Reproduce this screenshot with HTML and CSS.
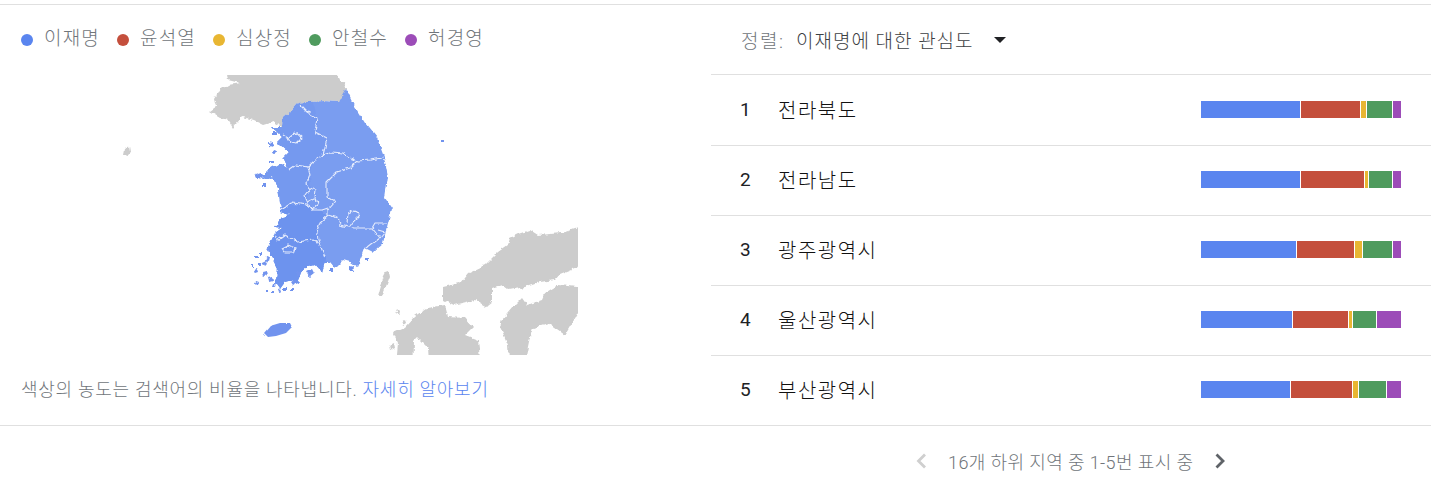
FILE: index.html
```html
<!DOCTYPE html>
<html lang="ko">
<head>
<meta charset="utf-8">
<title>하위 지역별 비교</title>
<link rel="stylesheet" href="styles.css">
</head>
<body>
<main class="widget">
  <section class="map-panel">
    <ul class="legend">
      <li class="legend-item"><span class="dot c-blue"></span>이재명</li>
      <li class="legend-item"><span class="dot c-red"></span>윤석열</li>
      <li class="legend-item"><span class="dot c-yellow"></span>심상정</li>
      <li class="legend-item"><span class="dot c-green"></span>안철수</li>
      <li class="legend-item"><span class="dot c-purple"></span>허경영</li>
    </ul>
    <svg class="map" viewBox="0 75 711 280" width="711" height="280" aria-label="지도">
      <defs>
        <filter id="rough" filterUnits="userSpaceOnUse" x="0" y="40" width="711" height="350">
          <feTurbulence type="fractalNoise" baseFrequency="0.16" numOctaves="3" seed="7" result="n"/>
          <feDisplacementMap in="SourceGraphic" in2="n" scale="5" xChannelSelector="R" yChannelSelector="G"/>
          <feGaussianBlur stdDeviation="0.35"/>
        </filter>
        <filter id="soft" filterUnits="userSpaceOnUse" x="0" y="40" width="711" height="350">
          <feTurbulence type="fractalNoise" baseFrequency="0.09" numOctaves="2" seed="3" result="n"/>
          <feDisplacementMap in="SourceGraphic" in2="n" scale="3" xChannelSelector="R" yChannelSelector="G"/>
          <feGaussianBlur stdDeviation="0.3"/>
        </filter>
        <clipPath id="frame"><rect x="0" y="75" width="578" height="280"/></clipPath>
        <clipPath id="mainland">
          <path d="M346 88L355 107L365 123L377 138L384 157L388 177L385 198L392 208L388 223L383 243L373 252L365 248L362 256L357 267L350 262L343 260L335 268L330 262L325 262L322 272L315 264L308 266L303 270L300 278L297 285L292 280L285 282L280 289L275 282L278 270L272 258L268 247L275 233L282 228L275 227L282 217L290 215L280 212L282 206L280 203L278 187L272 177L265 180L262 177L268 170L280 163L288 168L283 157L288 152L277 142L282 137L272 127L282 127L283 118L290 112L298 103L310 102L323 101L338 102Z"/>
        </clipPath>
      </defs>
      <g clip-path="url(#frame)">
        <g class="land" filter="url(#rough)">
          <path d="M225 60H332L340 80L346 87L345 93L338 102L323 101L310 102L298 103L290 112L283 118L282 127L273 122L263 125L253 120L242 117L236 124L233 128L228 120L220 118L210 112L217 107L215 98L220 90L228 85L240 83L228 80Z"/>
          <path d="M125 149l5-3 1 6-4 3-3-1zM378 297l3-11 2-8 3-6 3-1 1 5-3 8-3 7-2 6zM396 314l2-5 2 2-1 5zM402 322l3-2 1 3-3 2zM390 345l4-2 1 5-4 2z"/>
          <path d="M595 226L577 228L562 233L538 235L530 230L518 234L510 238L508 245L498 252L485 265L468 273L460 283L443 287L443 300L453 305L475 300L487 307L492 303L492 288L502 285L508 290L525 287L540 282L555 280L560 274L577 267L595 262Z"/>
          <path d="M595 287L577 287L558 285L545 293L542 300L527 305L522 298L513 307L502 320L500 327L503 333L508 345L510 375H522L530 337L533 328L548 323L565 335L577 315L595 305Z"/>
          <path d="M445 305L427 308L415 316L405 327L393 332L398 343L395 375H413L414 342L418 338L428 348L430 375H482L478 340L465 335L473 327L465 318L448 317Z"/>
        </g>
        <g filter="url(#rough)">
          <g clip-path="url(#mainland)">
            <rect class="base" x="250" y="80" width="150" height="215"/>
            <path class="mid" d="M260 100H312L318 120L316 132L327 140L323 155L312 163L310 175L311 188L306 200L312 212H260Z"/>
            <path class="dark" d="M255 205H306L318 210L328 215L320 222L316 232L318 240L326 258L322 300H255Z"/>
          </g>
          <path class="isle" d="M441 140h3v2h-3zM262 262l4-2 2 4-3 3zM254 270l3-1 1 3-3 1zM262 272l4-1 1 4-4 2zM268 277l4-1 1 4-4 1zM256 281l3 1-1 3-3-1zM278 290l3-1 1 3-3 1zM284 287l3 0 0 3-3 0zM290 288l3 0 0 2-3 0zM273 283l3 0-1 4-3-1zM266 256l3 1-1 4-3-1zM260 252l3 0 0 3-3 0zM292 282l4-2 1 3-3 2zM306 272l6-3 2 4-5 4zM296 272l4 0 0 4-4 0zM330 268l4 0 0 4-4 0zM349 266l5 1-1 5-4-1zM365 258l3 0 0 3-3 0zM255 174l6-2 3 5-7 1zM268 142l5 1-1 4-4-1zM273 132l4 0 0 3-4 0zM254 256l3 0 0 3-3 0zM258 264l3 0 0 3-3 0zM252 264l2 0 0 3-2 0zM268 248l3 1-1 3-3-1zM262 184l4 0 0 3-4 0zM274 150l3 1-1 3-3-1zM270 160l4 0 0 3-4 0zM266 290l2 0 0 2-2 0zM272 292l2 0 0 2-2 0z"/>
          <g class="bounds">
            <path d="M300 105L307 112L317 118L316 126L315 132L327 138L325 147L323 155L332 152L343 153L350 158L357 161L370 160L383 158"/>
            <path d="M323 155L320 157L313 162L308 167L295 165L288 170"/>
            <path d="M357 161L350 168L337 172L327 182L327 197L335 202L328 210L328 215"/>
            <path d="M308 167L310 175L307 183L310 188L305 195L307 202L311 210L322 210L328 208"/>
            <path d="M310 188L316 190L315 198L307 202M316 198L318 204L311 210"/>
            <path d="M280 210L292 203L307 205L311 210"/>
            <path d="M283 135L288 138L295 132L302 138L297 143L290 142L288 138"/>
            <path d="M328 215L320 222L317 232L318 240L325 257"/>
            <path d="M328 215L338 218L340 225L353 228L372 228L380 238L367 248"/>
            <path d="M347 223L348 213L355 210L360 215L353 222L350 226"/>
            <path d="M372 228L375 223L387 223M380 238L385 232L378 230"/>
            <path d="M275 233L277 241L285 235L297 242L312 240L318 243"/>
            <path d="M282 248L288 245L295 248L293 253L285 253Z"/>
          </g>
        </g>
        <path class="jeju" filter="url(#soft)" d="M264 333L270 326L280 323L290 323L292 327L286 333L276 336L268 337Z"/>
      </g>
    </svg>
    <p class="note">색상의 농도는 검색어의 비율을 나타냅니다. <a class="more" href="#">자세히 알아보기</a></p>
  </section>
  <section class="list-panel">
    <div class="sort">
      <span class="sort-label">정렬:</span>
      <span class="sort-value">이재명에 대한 관심도</span>
      <span class="caret"></span>
    </div>
    <ol class="rows">
      <li class="row"><span class="rank">1</span><span class="name">전라북도</span>
        <div class="bar"><i class="c-blue" style="width:99px"></i><i class="c-red" style="width:59px"></i><i class="c-yellow" style="width:5px"></i><i class="c-green" style="width:25px"></i><i class="c-purple" style="width:8px"></i></div></li>
      <li class="row"><span class="rank">2</span><span class="name">전라남도</span>
        <div class="bar"><i class="c-blue" style="width:99px"></i><i class="c-red" style="width:63px"></i><i class="c-yellow" style="width:3px"></i><i class="c-green" style="width:23px"></i><i class="c-purple" style="width:8px"></i></div></li>
      <li class="row"><span class="rank">3</span><span class="name">광주광역시</span>
        <div class="bar"><i class="c-blue" style="width:95px"></i><i class="c-red" style="width:57px"></i><i class="c-yellow" style="width:7px"></i><i class="c-green" style="width:29px"></i><i class="c-purple" style="width:8px"></i></div></li>
      <li class="row"><span class="rank">4</span><span class="name">울산광역시</span>
        <div class="bar"><i class="c-blue" style="width:91px"></i><i class="c-red" style="width:55px"></i><i class="c-yellow" style="width:3px"></i><i class="c-green" style="width:23px"></i><i class="c-purple" style="width:24px"></i></div></li>
      <li class="row"><span class="rank">5</span><span class="name">부산광역시</span>
        <div class="bar"><i class="c-blue" style="width:89px"></i><i class="c-red" style="width:61px"></i><i class="c-yellow" style="width:5px"></i><i class="c-green" style="width:27px"></i><i class="c-purple" style="width:14px"></i></div></li>
    </ol>
  </section>
</main>
<nav class="pager">
  <svg class="chev" width="14" height="18" viewBox="0 0 14 18"><path class="chev-off" d="M11 2.500L4.500 9L11 15.500"/></svg>
  <span class="pager-text">16개 하위 지역 중 1-5번 표시 중</span>
  <svg class="chev" width="14" height="18" viewBox="0 0 14 18"><path class="chev-on" d="M3.500 2.500L10 9L3.500 15.500"/></svg>
</nav>
</body>
</html>
```
FILE: styles.css
```css
* { box-sizing: border-box; }
html, body { margin: 0; padding: 0; background: #fff; }
body {
  height: 495px;
  overflow: hidden;
  padding-top: 4px;
  font-family: Roboto, "Noto Sans CJK KR", sans-serif;
  font-weight: 300;
}
.widget {
  display: flex;
  height: 422px;
  border-top: 1px solid #e0e0e0;
  border-bottom: 1px solid #e0e0e0;
}
.map-panel { width: 711px; flex: none; display: flex; flex-direction: column; }
.legend {
  list-style: none;
  margin: 0;
  height: 70px;
  padding: 0 0 7px 21px;
  display: flex;
  align-items: center;
}
.legend-item {
  width: 96px;
  display: flex;
  align-items: center;
  font-size: 19px;
  letter-spacing: 1.2px;
  color: #70757a;
}
.dot { width: 12px; height: 12px; border-radius: 50%; margin: 7px 11px 0 0; flex: none; }
.c-blue { background: #5a85ef; }
.c-red { background: #c44f3c; }
.c-yellow { background: #e8b632; }
.c-green { background: #4f9b5e; }
.c-purple { background: #9c4cb8; }
.map { display: block; }
.land path { fill: #cccccc; }
.base { fill: #7a9df0; }
.mid { fill: #7599ef; }
.dark { fill: #6d93ee; }
.isle { fill: #7193ee; }
.jeju { fill: #7193ee; }
.bounds path { fill: none; stroke: #e6ecfc; stroke-width: 1.1; stroke-linejoin: round; }
.note {
  margin: 0;
  flex: 1;
  padding-left: 21px;
  padding-bottom: 4px;
  display: flex;
  align-items: center;
  font-size: 18px;
  letter-spacing: 0.72px;
  color: #70757a;
  white-space: pre;
}
.more { color: #5a85ef; text-decoration: none; }
.list-panel { flex: 1; display: flex; flex-direction: column; }
.sort {
  height: 70px;
  padding-left: 30px;
  display: flex;
  align-items: center;
  border-bottom: 1px solid #e0e0e0;
  font-size: 19px;
}
.sort-label { color: #70757a; width: 55px; letter-spacing: 1.5px; }
.sort-value { color: #3c4043; width: 198px; letter-spacing: 1px; }
.caret { width: 0; height: 0; border-left: 6px solid transparent; border-right: 6px solid transparent; border-top: 6px solid #202124; }
.rows { list-style: none; margin: 0; padding: 0; }
.row {
  height: 70px;
  padding: 0 30px;
  display: flex;
  align-items: center;
  border-top: 1px solid #e0e0e0;
  font-size: 19px;
  color: #111;
}
.row:first-child { border-top-color: transparent; }
.rank { width: 37px; margin-bottom: 2px; margin-left: -1px; margin-right: 1px; font-weight: 400; color: #202124; }
.name { flex: 1; font-size: 20px; letter-spacing: 1.5px; margin-bottom: 2px; }
.bar { width: 200px; height: 17px; display: flex; gap: 1px; margin-bottom: 2px; }
.bar i { display: block; height: 100%; flex: none; }
.pager {
  height: 69px;
  padding-left: 914px;
  display: flex;
  align-items: center;
}
.pager-text { width: 245px; margin: 0 20px; font-size: 18px; letter-spacing: .4px; color: #70757a; white-space: nowrap; }
.chev path { fill: none; stroke-width: 2.8; }
.chev-off { stroke: #cfcfcf; }
.chev-on { stroke: #5f6368; }
```
